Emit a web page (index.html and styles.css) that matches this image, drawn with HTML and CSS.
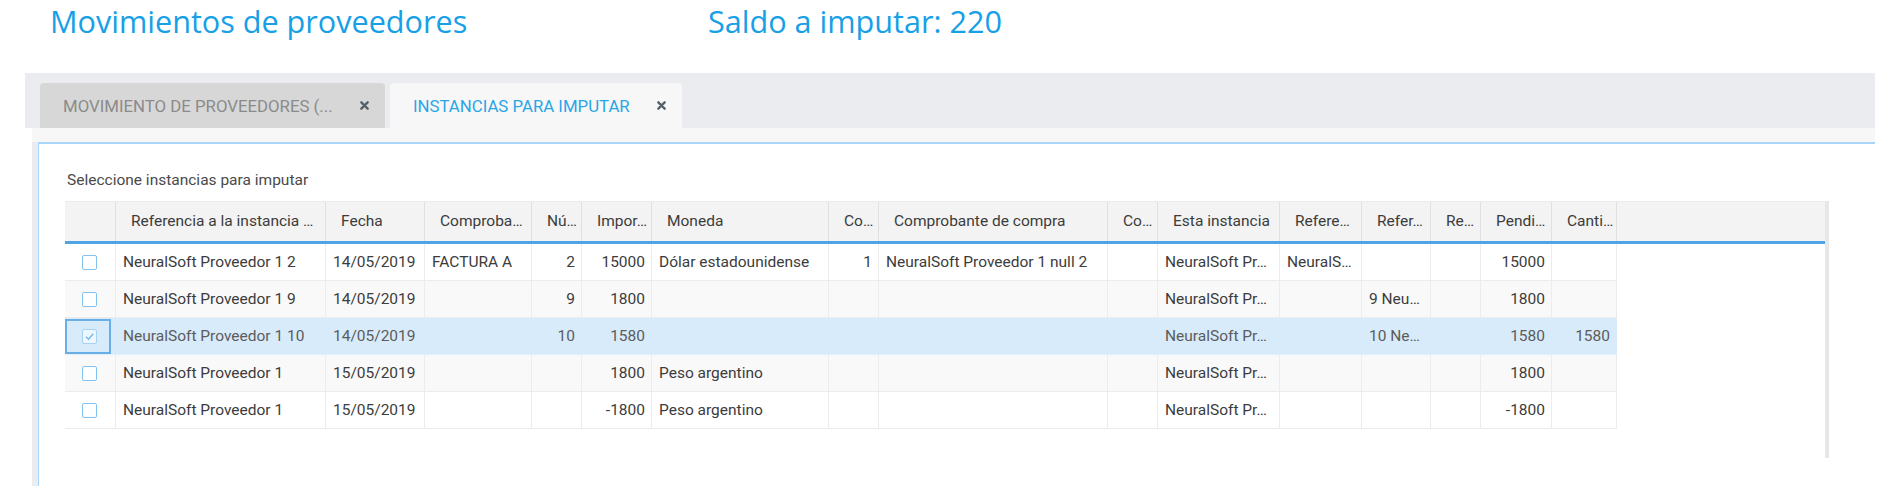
FILE: index.html
```html
<!DOCTYPE html>
<html lang="es">
<head>
<meta charset="utf-8">
<title>Movimientos de proveedores</title>
<link rel="stylesheet" href="styles.css">
</head>
<body>
<div class="page">
  <header class="titles">
    <h1 class="title">Movimientos de proveedores</h1>
    <div class="saldo">Saldo a imputar: 220</div>
  </header>

  <section class="tabpanel">
    <nav class="tabbar">
      <div class="tab tab-inactive">
        <span class="tab-label">MOVIMIENTO DE PROVEEDORES (...</span>
        <svg class="tab-close" viewBox="0 0 10 10" width="9" height="9"><path d="M1.5 1.5 L8.5 8.5 M8.5 1.5 L1.5 8.5" /></svg>
      </div>
      <div class="tab tab-active">
        <span class="tab-label">INSTANCIAS PARA IMPUTAR</span>
        <svg class="tab-close" viewBox="0 0 10 10" width="9" height="9"><path d="M1.5 1.5 L8.5 8.5 M8.5 1.5 L1.5 8.5" /></svg>
      </div>
    </nav>

    <div class="frame">
      <div class="strip"></div>
      <div class="frame-body">
        <div class="panel">
          <p class="label">Seleccione instancias para imputar</p>

          <div class="grid">
            <div class="grid-head">
              <div class="hc"></div>
              <div class="hc">Referencia a la instancia …</div>
              <div class="hc">Fecha</div>
              <div class="hc">Comproba…</div>
              <div class="hc">Nú…</div>
              <div class="hc">Impor…</div>
              <div class="hc">Moneda</div>
              <div class="hc">Co…</div>
              <div class="hc">Comprobante de compra</div>
              <div class="hc">Co…</div>
              <div class="hc">Esta instancia</div>
              <div class="hc">Refere…</div>
              <div class="hc">Refer…</div>
              <div class="hc">Re…</div>
              <div class="hc">Pendi…</div>
              <div class="hc">Canti…</div>
              <div class="hc hc-fill"></div>
            </div>

            <div class="row">
              <div class="c c-check"><span class="cb"></span></div>
              <div class="c">NeuralSoft Proveedor 1 2</div>
              <div class="c">14/05/2019</div>
              <div class="c">FACTURA A</div>
              <div class="c num">2</div>
              <div class="c num">15000</div>
              <div class="c">Dólar estadounidense</div>
              <div class="c num">1</div>
              <div class="c">NeuralSoft Proveedor 1 null 2</div>
              <div class="c"></div>
              <div class="c">NeuralSoft Pr…</div>
              <div class="c">NeuralS…</div>
              <div class="c"></div>
              <div class="c"></div>
              <div class="c num">15000</div>
              <div class="c"></div>
            </div>

            <div class="row row-alt">
              <div class="c c-check"><span class="cb"></span></div>
              <div class="c">NeuralSoft Proveedor 1 9</div>
              <div class="c">14/05/2019</div>
              <div class="c"></div>
              <div class="c num">9</div>
              <div class="c num">1800</div>
              <div class="c"></div>
              <div class="c"></div>
              <div class="c"></div>
              <div class="c"></div>
              <div class="c">NeuralSoft Pr…</div>
              <div class="c"></div>
              <div class="c">9 Neu…</div>
              <div class="c"></div>
              <div class="c num">1800</div>
              <div class="c"></div>
            </div>

            <div class="row row-selected">
              <div class="c c-check c-focus"><span class="cb cb-checked"><svg viewBox="0 0 12 12" width="11" height="11"><path d="M2.2 6.2 L5 9 L10 3" /></svg></span></div>
              <div class="c">NeuralSoft Proveedor 1 10</div>
              <div class="c">14/05/2019</div>
              <div class="c"></div>
              <div class="c num">10</div>
              <div class="c num">1580</div>
              <div class="c"></div>
              <div class="c"></div>
              <div class="c"></div>
              <div class="c"></div>
              <div class="c">NeuralSoft Pr…</div>
              <div class="c"></div>
              <div class="c">10 Ne…</div>
              <div class="c"></div>
              <div class="c num">1580</div>
              <div class="c num">1580</div>
            </div>

            <div class="row row-alt">
              <div class="c c-check"><span class="cb"></span></div>
              <div class="c">NeuralSoft Proveedor 1</div>
              <div class="c">15/05/2019</div>
              <div class="c"></div>
              <div class="c"></div>
              <div class="c num">1800</div>
              <div class="c">Peso argentino</div>
              <div class="c"></div>
              <div class="c"></div>
              <div class="c"></div>
              <div class="c">NeuralSoft Pr…</div>
              <div class="c"></div>
              <div class="c"></div>
              <div class="c"></div>
              <div class="c num">1800</div>
              <div class="c"></div>
            </div>

            <div class="row">
              <div class="c c-check"><span class="cb"></span></div>
              <div class="c">NeuralSoft Proveedor 1</div>
              <div class="c">15/05/2019</div>
              <div class="c"></div>
              <div class="c"></div>
              <div class="c num">-1800</div>
              <div class="c">Peso argentino</div>
              <div class="c"></div>
              <div class="c"></div>
              <div class="c"></div>
              <div class="c">NeuralSoft Pr…</div>
              <div class="c"></div>
              <div class="c"></div>
              <div class="c"></div>
              <div class="c num">-1800</div>
              <div class="c"></div>
            </div>
          </div>
        </div>
      </div>
    </div>
  </section>
</div>
</body>
</html>
```

FILE: styles.css
```css
* { box-sizing: border-box; }

html, body {
  margin: 0;
  padding: 0;
  background: #ffffff;
  font-family: Roboto, "Liberation Sans", Arial, sans-serif;
  overflow: hidden;
}

.page {
  width: 1890px;
  height: 486px;
  overflow: hidden;
}

/* ---------- titles ---------- */
.titles {
  display: flex;
  align-items: flex-start;
  height: 73px;
  padding: 1px 0 0 50px;
}

.title,
.saldo {
  margin: 0;
  font-family: "Open Sans", "Noto Sans", sans-serif;
  font-weight: 400;
  font-size: 30.6px;
  line-height: 41px;
  color: #17a0e6;
  white-space: nowrap;
}

.title { width: 658px; }

/* ---------- tabs ---------- */
.tabpanel {
  margin: 0 15px 0 25px;
}

.tabbar {
  display: flex;
  align-items: flex-end;
  gap: 5px;
  height: 55px;
  padding: 10px 0 0 15px;
  background: #ebecef;
}

.tab {
  display: flex;
  align-items: center;
  height: 45px;
  padding: 0 16px 0 23px;
  border-radius: 4px 4px 0 0;
  font-size: 16.8px;
  white-space: nowrap;
}

.tab-label {
  flex: 1;
  overflow: hidden;
}

.tab-inactive {
  width: 345px;
  background: #d7d7d7;
  color: #8b8b8b;
}

.tab-active {
  width: 292px;
  background: #f7f7f7;
  color: #29a6e6;
}

.tab-close {
  flex: none;
  fill: none;
  stroke: #55616a;
  stroke-width: 2.6;
  stroke-linecap: round;
}

/* ---------- frame / panel ---------- */
.frame {
  margin-left: 7px;
}

.strip {
  height: 14px;
  background: #f7f7f7;
}

.frame-body {
  border-left: 6px solid #ebecef;
  height: 400px;
}

.panel {
  height: 100%;
  border-top: 2px solid #a9d6f8;
  border-left: 1px solid #a9d6f8;
  padding: 27px 0 0 26px;
  background: #ffffff;
}

.label {
  margin: 0 0 12px 2px;
  font-size: 15.5px;
  line-height: 18px;
  color: #4a4a4a;
}

/* ---------- grid ---------- */
.grid {
  width: 1764px;
  height: 257px;
  border-right: 4px solid #e7e7e7;
  font-size: 15.5px;
  color: #3c3c3c;
}

.grid-head,
.row {
  display: grid;
  grid-template-columns: 51px 210px 99px 107px 50px 70px 177px 50px 229px 50px 122px 82px 69px 50px 71px 65px;
}

.grid-head {
  grid-template-columns: 51px 210px 99px 107px 50px 70px 177px 50px 229px 50px 122px 82px 69px 50px 71px 65px 1fr;
  height: 43px;
  background: #f3f3f3;
  border-top: 1px solid #ececec;
  border-bottom: 3px solid #4ea4e4;
}

.hc {
  padding: 0 8px 0 15px;
  line-height: 39px;
  border-right: 1px solid #e0e0e0;
  white-space: nowrap;
  overflow: hidden;
}

.hc:first-child { padding: 0; }
.hc-fill { border-right: none; }

.row {
  width: 1552px;
  height: 37px;
  background: #ffffff;
}

.row:first-of-type { height: 38px; }

.row-alt { background: #f9f9f9; }

.row-selected {
  background: #d7ebfa;
  color: #5c5c5c;
}

.c {
  position: relative;
  padding: 0 7px;
  line-height: 36px;
  border-right: 1px solid #ececec;
  border-bottom: 1px solid #ececec;
  white-space: nowrap;
  overflow: hidden;
}

.row-selected .c {
  border-right-color: #d7ebfa;
  border-bottom-color: #e3eef7;
}

.num {
  text-align: right;
  padding-right: 6px;
}

.c-check {
  display: flex;
  align-items: center;
  justify-content: center;
  padding: 0 1px 0 0;
}

.c-focus::after {
  content: "";
  position: absolute;
  left: 0;
  top: 1px;
  right: 4px;
  bottom: 0;
  border: 2px solid #69aee5;
}

.cb {
  display: flex;
  align-items: center;
  justify-content: center;
  width: 15px;
  height: 15px;
  border: 1px solid #83c3ef;
  border-radius: 2px;
  background: #ffffff;
}

.cb-checked {
  background: #eef7fd;
  border-color: #a3d2f3;
}

.cb-checked svg {
  fill: none;
  stroke: #6cb8ec;
  stroke-width: 1.4;
}
```
